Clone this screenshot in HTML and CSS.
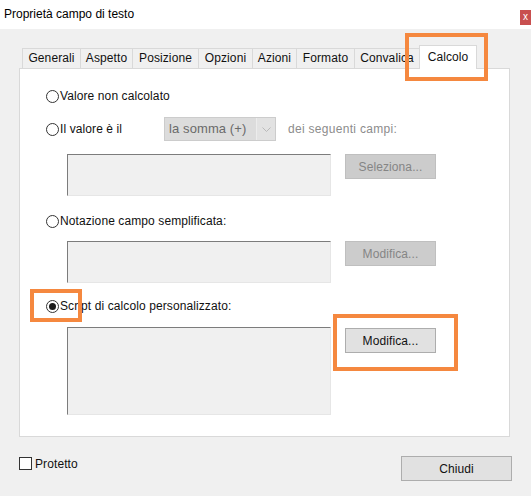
FILE: index.html
```html
<!DOCTYPE html>
<html lang="it">
<head>
<meta charset="utf-8">
<title>Proprietà campo di testo</title>
<link rel="stylesheet" href="styles.css">
</head>
<body>
<div class="window">
  <div class="titlebar">
    <span class="title">Proprietà campo di testo</span>
    <span class="close">x</span>
  </div>
  <div class="dialog">
    <div class="tabs">
      <div class="tab t-generali">Generali</div>
      <div class="tab t-aspetto">Aspetto</div>
      <div class="tab t-posizione">Posizione</div>
      <div class="tab t-opzioni">Opzioni</div>
      <div class="tab t-azioni">Azioni</div>
      <div class="tab t-formato">Formato</div>
      <div class="tab t-convalica">Convalica</div>
      <div class="tab active t-calcolo">Calcolo</div>
    </div>
    <div class="panel">
      <div class="row r1"><span class="radio"></span><span class="label">Valore non calcolato</span></div>
      <div class="row r2">
        <span class="radio"></span><span class="label fixed">Il valore è il</span>
        <div class="select">
          <span class="sel-text">la somma (+)</span>
          <span class="sel-arrow"><svg width="9" height="5" viewBox="0 0 9 5"><path d="M0.5 0.5 L4.5 4.5 L8.5 0.5" fill="none" stroke="#b9b9b9" stroke-width="1"/></svg></span>
        </div>
        <span class="muted">dei seguenti campi:</span>
      </div>
      <div class="group g1"><div class="field"></div><button class="btn disabled">Seleziona...</button></div>
      <div class="row r3"><span class="radio"></span><span class="label">Notazione campo semplificata:</span></div>
      <div class="group g2"><div class="field"></div><button class="btn disabled">Modifica...</button></div>
      <div class="row r4"><span class="radio checked"></span><span class="label">Script di calcolo personalizzato:</span></div>
      <div class="group g3"><div class="field tall"></div><button class="btn enabled">Modifica...</button></div>
    </div>
    <div class="footer">
      <label class="check"><span class="box"></span><span>Protetto</span></label>
      <button class="btn enabled wide">Chiudi</button>
    </div>
  </div>
  <div class="mark m1"></div>
  <div class="mark m2"></div>
  <div class="mark m3"></div>
</div>
</body>
</html>
```
FILE: styles.css
```css
* { box-sizing: border-box; }
html, body { margin: 0; padding: 0; }
body {
  width: 531px;
  height: 496px;
  overflow: hidden;
  background: #f0f0f0;
  font-family: "Liberation Sans", Arial, sans-serif;
  font-size: 12px;
  letter-spacing: 0.1px;
  color: #111;
}
.window { position: relative; width: 531px; height: 496px; }

.titlebar {
  height: 29px;
  background: #ffffff;
  display: flex;
  align-items: flex-start;
  justify-content: space-between;
  padding-left: 4px;
}
.title { line-height: 29px; color: #000; letter-spacing: 0; }
.close {
  margin-top: 10px;
  width: 11px;
  height: 15px;
  background: #c84f4f;
  color: #fff;
  font-size: 10px;
  line-height: 14px;
  padding-left: 3px;
}

.dialog { padding: 0 20px 0 19px; }

.tabs {
  position: relative;
  z-index: 2;
  display: flex;
  align-items: flex-end;
  height: 24px;
  margin-top: 16px;
  margin-bottom: -1px;
  padding-left: 3px;
}
.tab {
  flex: none;
  height: 20px;
  margin-bottom: 1px;
  border: 1px solid #d9d9d9;
  border-bottom: none;
  border-right: none;
  line-height: 18px;
  text-align: center;
  background: #f0f0f0;
  color: #111;
  white-space: nowrap;
}
.t-generali { width: 58px; }
.t-aspetto { width: 52px; }
.t-posizione { width: 66px; }
.t-opzioni { width: 54px; }
.t-azioni { width: 44px; }
.t-formato { width: 58px; }
.t-convalica { width: 65px; }
.t-calcolo { width: 58px; }
.tab.active {
  height: 24px;
  margin-bottom: 0;
  border-right: 1px solid #d9d9d9;
  background: #ffffff;
  line-height: 22px;
}

.panel {
  height: 369px;
  margin-right: 1px;
  background: #ffffff;
  border: 1px solid #d9d9d9;
  padding: 20px 0 0 26px;
}

.row { display: flex; align-items: center; }
.r1 { height: 14px; }
.r2 { height: 24px; margin-top: 14px; }
.r3 { height: 14px; margin-top: 18px; }
.r4 { height: 14px; margin-top: 16px; }

.radio {
  width: 13px;
  height: 13px;
  border: 1px solid #333;
  border-radius: 50%;
  background: #fff;
  margin-right: 1px;
  flex: none;
  display: flex;
  align-items: center;
  justify-content: center;
}
.radio.checked::after {
  content: "";
  width: 7px;
  height: 7px;
  border-radius: 50%;
  background: #1a1a1a;
}
.label { white-space: nowrap; }
.label.fixed { width: 104px; }

.select {
  width: 112px;
  height: 24px;
  display: flex;
  background: #dcdcdc;
  border: 1px solid #cccccc;
}
.sel-text {
  flex: 1;
  line-height: 22px;
  padding-left: 4px;
  color: #6a6a6a;
  font-size: 13px;
}
.sel-arrow {
  width: 19px;
  display: flex;
  align-items: center;
  justify-content: center;
  border-left: 1px solid #ececec;
  background: #e2e2e2;
}
.muted { margin-left: 12px; color: #8c8c8c; letter-spacing: 0.3px; }

.group {
  display: flex;
  align-items: flex-start;
  gap: 14px;
  padding-left: 21px;
}
.g1 { margin-top: 13px; }
.g2 { margin-top: 13px; }
.g3 { margin-top: 14px; }
.field {
  width: 264px;
  height: 42px;
  background: #f0f0f0;
  border: 1px solid;
  border-color: #7c7c7c #e6e6e6 #e6e6e6 #7c7c7c;
}
.field.tall { height: 88px; }
.g3 .btn { margin-top: 1px; }

.btn {
  width: 91px;
  height: 25px;
  font-family: "Liberation Sans", Arial, sans-serif;
  font-size: 12px;
  letter-spacing: 0.1px;
  padding: 0;
  margin: 0;
  border: 1px solid #adadad;
  background: #e1e1e1;
  color: #111;
}
.btn.disabled {
  background: #cccccc;
  border-color: #bfbfbf;
  color: #858585;
}
.btn.wide { width: 111px; }

.footer {
  display: flex;
  justify-content: space-between;
  align-items: flex-start;
  margin-top: 19px;
  margin-right: -1px;
}
.check {
  display: flex;
  align-items: center;
  gap: 3px;
  margin-top: 1px;
  height: 13px;
}
.box {
  width: 13px;
  height: 13px;
  border: 1px solid #333;
  background: #fff;
}

.mark {
  position: absolute;
  border: 4px solid #f5883f;
  z-index: 5;
}
.m1 { left: 405px; top: 33px; width: 83px; height: 48px; }
.m2 { left: 30px; top: 289px; width: 52px; height: 33px; }
.m3 { left: 333px; top: 314px; width: 125px; height: 57px; }
```
